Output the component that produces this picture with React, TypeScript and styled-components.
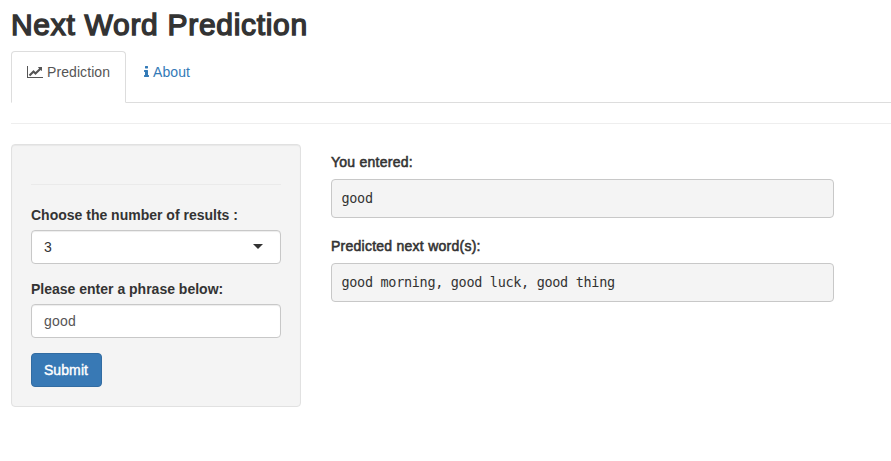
import React from "react";
import styled, { createGlobalStyle } from "styled-components";

const Global = createGlobalStyle`
  *, *::before, *::after { box-sizing: border-box; }
  html, body { margin: 0; background: #fff; overflow: hidden; }
  body {
    font-family: "Liberation Sans", Arial, sans-serif;
    font-size: 14px;
    line-height: 20px;
    color: #333;
  }
`;

const Page = styled.div`
  padding: 8px 0 0 11px;
`;

const Title = styled.h2`
  margin: 0 0 10px;
  font-size: 30px;
  line-height: 33px;
  font-weight: 400;
  -webkit-text-stroke: 1.4px #333;
  letter-spacing: 0.7px;
  white-space: nowrap;
`;

const Tabs = styled.nav`
  display: flex;
  height: 52px;
  border-bottom: 1px solid #ddd;
`;

const Tab = styled.a<{ $active?: boolean }>`
  display: flex;
  align-items: flex-start;
  gap: 4px;
  width: ${(p) => (p.$active ? 115 : 81)}px;
  height: 52px;
  padding: 10px 0 0 ${(p) => (p.$active ? 15 : 17)}px;
  white-space: nowrap;
  letter-spacing: 0.08px;
  border: 1px solid ${(p) => (p.$active ? "#ddd" : "transparent")};
  border-bottom-color: ${(p) => (p.$active ? "#fff" : "transparent")};
  border-radius: 4px 4px 0 0;
  color: ${(p) => (p.$active ? "#555" : "#337ab7")};
`;

const Icon = styled.svg`
  flex: none;
  height: 14px;
  margin-top: 3px;
  fill: currentColor;
`;

const Rule = styled.hr`
  margin: 20px 0;
  border: 0;
  border-top: 1px solid #eee;
`;

const Columns = styled.div`
  display: flex;
  align-items: flex-start;
  gap: 30px;
`;

const Well = styled.form`
  width: 290px;
  height: 263px;
  padding: 19px;
  background: #f4f4f4;
  border: 1px solid #e1e1e1;
  border-radius: 4px;
  box-shadow: inset 0 1px 1px rgba(0, 0, 0, 0.05);

  ${Rule} { border-color: #eaeaea; }
`;

const Label = styled.label`
  display: block;
  height: 20px;
  margin-bottom: 5px;
  font-weight: 700;
  white-space: nowrap;
`;

const Control = styled.div<{ $muted?: boolean }>`
  display: flex;
  align-items: center;
  justify-content: space-between;
  height: 34px;
  margin-bottom: 15px;
  padding: 0 17px 0 12px;
  color: ${(p) => (p.$muted ? "#555" : "#333")};
  letter-spacing: 0.25px;
  background: #fff;
  border: 1px solid #c8c8c8;
  border-radius: 4px;
  box-shadow: inset 0 1px 1px rgba(0, 0, 0, 0.075);
`;

const Caret = styled.span`
  margin-bottom: 2px;
  border: 5px solid transparent;
  border-top-color: #333;
  border-bottom: 0;
`;

const Button = styled.button`
  width: 71px;
  height: 34px;
  padding: 0 1px 0 0;
  font: inherit;
  letter-spacing: 0.1px;
  -webkit-text-stroke: 0.4px #fff;
  color: #fff;
  background: #3879b5;
  border: 1px solid #326ca2;
  border-radius: 4px;
`;

const Results = styled.section`
  width: 503px;
  padding-top: 8px;
`;

const Heading = styled.div`
  height: 20px;
  margin-bottom: 7px;
  font-weight: 400;
  -webkit-text-stroke: 0.55px #333;
  letter-spacing: 0.25px;
`;

const Output = styled.pre`
  height: 39px;
  margin: 0 0 18px;
  padding: 9px 9.5px;
  font-family: "DejaVu Sans Mono", monospace;
  font-size: 13.5px;
  line-height: 19px;
  letter-spacing: -0.32px;
  background: #f4f4f4;
  border: 1px solid #c8c8c8;
  border-radius: 4px;
`;

const ChartIcon = () => (
  <Icon width="16" viewBox="0 0 2048 1792">
    <path d="M2048 1536v128h-2048v-1536h128v1408h1920zm-128-1248v435q0 21-19.5 29.5t-35.5-7.5l-121-121-633 633q-10 10-23 10t-23-10l-233-233-416 416-192-192 585-585q10-10 23-10t23 10l233 233 464-464-121-121q-16-16-7.5-35.5t29.5-19.5h435q14 0 23 9t9 23z" />
  </Icon>
);

const InfoIcon = () => (
  <Icon width="5" viewBox="576 0 640 1792">
    <path d="M1216 1344v128q0 26-19 45t-45 19h-512q-26 0-45-19t-19-45v-128q0-26 19-45t45-19h64v-384h-64q-26 0-45-19t-19-45v-128q0-26 19-45t45-19h384q26 0 45 19t19 45v576h64q26 0 45 19t19 45zm-128-1152v192q0 26-19 45t-45 19h-256q-26 0-45-19t-19-45v-192q0-26 19-45t45-19h256q26 0 45 19t19 45z" />
  </Icon>
);

export default function App() {
  return (
    <Page>
      <Global />
      <Title>Next Word Prediction</Title>
      <Tabs>
        <Tab $active><ChartIcon />Prediction</Tab>
        <Tab><InfoIcon />About</Tab>
      </Tabs>
      <Rule />
      <Columns>
        <Well>
          <Rule />
          <Label>Choose the number of results :</Label>
          <Control>3<Caret /></Control>
          <Label>Please enter a phrase below:</Label>
          <Control $muted>good</Control>
          <Button type="button">Submit</Button>
        </Well>
        <Results>
          <Heading>You entered:</Heading>
          <Output>good</Output>
          <Heading>Predicted next word(s):</Heading>
          <Output>good morning, good luck, good thing</Output>
        </Results>
      </Columns>
    </Page>
  );
}
